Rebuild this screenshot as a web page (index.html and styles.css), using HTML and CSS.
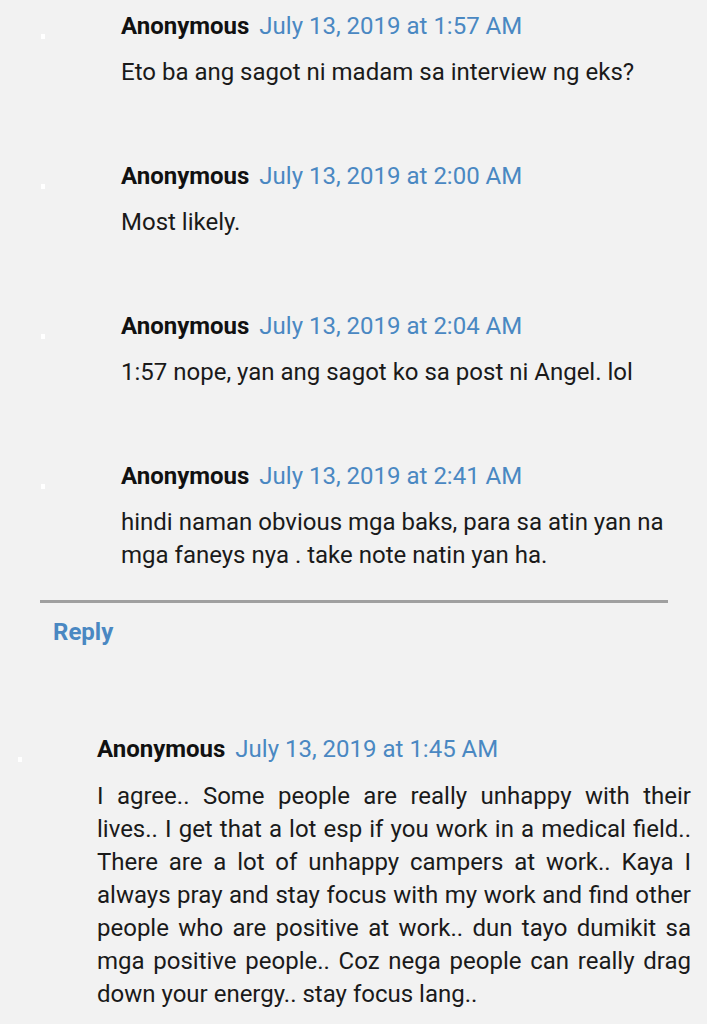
FILE: index.html
```html
<!DOCTYPE html>
<html>
<head>
<meta charset="utf-8">
<link rel="stylesheet" href="styles.css">
</head>
<body>
<div class="thread">
  <div class="replies">
    <div class="comment">
      <span class="avatar"></span>
      <div class="body">
        <div class="head"><span class="name">Anonymous</span> <a class="date">July 13, 2019 at 1:57 AM</a></div>
        <p class="text">Eto ba ang sagot ni madam sa interview ng eks?</p>
      </div>
    </div>
    <div class="comment">
      <span class="avatar"></span>
      <div class="body">
        <div class="head"><span class="name">Anonymous</span> <a class="date">July 13, 2019 at 2:00 AM</a></div>
        <p class="text">Most likely.</p>
      </div>
    </div>
    <div class="comment">
      <span class="avatar"></span>
      <div class="body">
        <div class="head"><span class="name">Anonymous</span> <a class="date">July 13, 2019 at 2:04 AM</a></div>
        <p class="text">1:57 nope, yan ang sagot ko sa post ni Angel. lol</p>
      </div>
    </div>
    <div class="comment">
      <span class="avatar"></span>
      <div class="body">
        <div class="head"><span class="name">Anonymous</span> <a class="date">July 13, 2019 at 2:41 AM</a></div>
        <p class="text">hindi naman obvious mga baks, para sa atin yan na mga faneys nya . take note natin yan ha.</p>
      </div>
    </div>
  </div>
  <div class="reply-bar">
    <a class="reply">Reply</a>
  </div>
</div>
<div class="top-comment">
  <span class="avatar"></span>
  <div class="body">
    <div class="head"><span class="name">Anonymous</span> <a class="date">July 13, 2019 at 1:45 AM</a></div>
    <p class="text justify">I agree.. Some people are really unhappy with their lives.. I get that a lot esp if you work in a medical field.. There are a lot of unhappy campers at work.. Kaya I always pray and stay focus with my work and find other people who are positive at work.. dun tayo dumikit sa mga positive people.. Coz nega people can really drag down your energy.. stay focus lang..</p>
  </div>
</div>
</body>
</html>
```
FILE: styles.css
```css
html, body {
  margin: 0;
  padding: 0;
  background: #f2f2f2;
}
body {
  font-family: Roboto, "Liberation Sans", sans-serif;
  font-size: 24px;
  line-height: 33px;
  color: #1a1a1a;
  width: 707px;
  overflow: hidden;
}
.thread {
  padding: 10px 40px 0 40px;
  width: 628px;
}
.replies {
  display: flex;
  flex-direction: column;
  gap: 71px;
  padding-bottom: 28px;
  border-bottom: 3px solid #a0a0a0;
}
.comment {
  display: flex;
  align-items: flex-start;
}
.avatar {
  display: block;
  width: 4px;
  height: 5px;
  background: #ffffff;
  flex: none;
}
.comment .avatar {
  margin: 24px 76px 0 1px;
}
.body {
  flex: 1;
  min-width: 0;
}
.head {
  white-space: nowrap;
}
.name {
  font-weight: 700;
  color: #111;
  margin-right: 4px;
}
.date {
  color: #4a88c2;
}
.text {
  margin: 13px 0 0 0;
}
.justify {
  text-align: justify;
}
.reply-bar {
  padding: 13px 0 0 13px;
}
.reply {
  color: #4a88c2;
  font-weight: 700;
}
.top-comment {
  display: flex;
  align-items: flex-start;
  padding: 84px 16px 40px 18px;
}
.top-comment .avatar {
  margin: 24px 75px 0 0;
}
.top-comment .text {
  margin-top: 14px;
}
```
